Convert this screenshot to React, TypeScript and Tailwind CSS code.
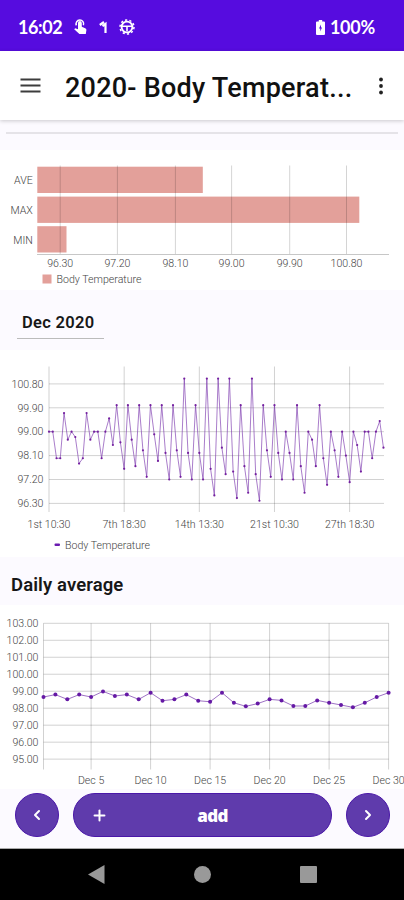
import { ChevronLeft, ChevronRight, Plus } from "lucide-react";

const READINGS = [
  99, 99, 98, 98, 99.7, 98.7, 99, 98.8, 97.8, 98, 99.7, 98.7, 99, 99, 98,
  99, 99.5, 98.5, 100, 98.6, 97.6, 100, 98.7, 97.7, 100, 98.3, 97.3, 100, 98.9, 97.9,
  100, 98.2, 97.2, 100, 98.3, 97.3, 101, 98.2, 97.2, 100, 98.2, 97.2, 101, 97.6, 96.6,
  101, 98.4, 97.4, 101, 97.5, 96.5, 100, 97.7, 96.7, 101, 97.4, 96.4, 100, 98.3, 97.3,
  100, 98.2, 97.2, 99, 98.2, 97.2, 100, 97.7, 96.7, 99, 98.7, 97.7, 100, 98, 97,
  99, 98.3, 97.3, 99, 98.1, 97.1, 99, 98.5, 97.5, 99, 99, 98, 99, 99.4, 98.4,
];

const DAILY = [
  98.66, 98.8, 98.52, 98.8, 98.66, 98.99, 98.72, 98.8, 98.52, 98.91,
  98.44, 98.52, 98.8, 98.44, 98.38, 98.91, 98.32, 98.11, 98.27, 98.52,
  98.46, 98.13, 98.13, 98.46, 98.32, 98.19, 98.05, 98.32, 98.66, 98.91,
];

const summaryBars = [
  { label: "AVE", y: 16.7, width: 165.5 },
  { label: "MAX", y: 46.6, width: 322 },
  { label: "MIN", y: 76.2, width: 29.2 },
];

const summaryTicks = [
  { label: "96.30", x: 60.2 },
  { label: "97.20", x: 117.4 },
  { label: "98.10", x: 175.4 },
  { label: "99.00", x: 231.6 },
  { label: "99.90", x: 289.7 },
  { label: "100.80", x: 346.5 },
];

const readingTicks = ["1st 10:30", "7th 18:30", "14th 13:30", "21st 10:30", "27th 18:30"];

const labelClass = "fill-[#444] font-['Roboto',sans-serif] text-[10.6px] font-light";

function StatusBar() {
  return (
    <div className="flex h-[51px] shrink-0 items-center bg-[#560cdf] pl-[18px] pr-[29px] pt-[3px] font-['Lato',sans-serif] text-[18px] font-bold text-white">
      <span className="w-[55px] tracking-[-0.4px]">16:02</span>
      <svg className="h-4 w-[62px]" viewBox="0 0 62 16" fill="none">
        {/* touch */}
        <path
          d="M5 8V4a1.900 1.900 0 0 1 3.800 0v3.800l3.400 1.400q1.400.6 1.200 1.800l-.6 4H6.400L1.200 10.200l1-1L5 10.200Z"
          fill="white"
        />
        <path d="M3.400 6.400A3.800 3.800 0 1 1 10.400 6.200" stroke="white" strokeWidth="1.500" />
        <path d="M26.800 6 31 3M29.500 7.200l3-2.200V14" stroke="white" strokeWidth="2.200" />
        {/* wheel */}
        <circle cx="54" cy="8" r="5.400" stroke="white" strokeWidth="1.900" />
        <circle cx="54" cy="8" r="7" stroke="white" strokeWidth="1.500" strokeDasharray="2.200 2.200" />
        <path d="M49 7.200h10M54 7.200v5" stroke="white" strokeWidth="1.600" />
      </svg>
      <svg className="ml-auto mr-[5px] h-[15px] w-[9px]" viewBox="0 0 9 15" fill="white">
        <path d="M2.800 0h3.400v1.500H8q1 0 1 1V14q0 1-1 1H1q-1 0-1-1V2.500q0-1 1-1h1.800Z" />
        <path d="M5 4.500 3 8.500h1.300V11.500L6 7.500H5Z" fill="#560cdf" />
      </svg>
      <span className="tracking-[-0.25px]">100%</span>
    </div>
  );
}

function AppBar() {
  return (
    <header className="relative flex h-[69px] shrink-0 items-center bg-white pl-5 shadow-[0_1px_4px_rgba(0,0,0,0.2)]">
      <svg className="h-4 w-[21px]" viewBox="0 0 21 16" stroke="#3c3c3c" strokeWidth="1.9">
        <path d="M.5 1.500h20M.5 7.500h20M.5 13.500h20" />
      </svg>
      <h1 className="ml-6 mt-[5px] w-[290px] whitespace-nowrap text-[27px] font-medium leading-none tracking-[0.24px] text-[#111]">
        2020- Body Temperat...
      </h1>
      <svg className="ml-[22px] h-5 w-2" viewBox="0 0 8 20" fill="#222">
        <circle cx="4" cy="3.500" r="1.900" />
        <circle cx="4" cy="10" r="1.900" />
        <circle cx="4" cy="16.500" r="1.900" />
      </svg>
    </header>
  );
}

function SummaryChart() {
  return (
    <svg className="block h-[140px] w-full shrink-0 bg-white" viewBox="0 0 404 140">
      {summaryBars.map((bar) => (
        <g key={bar.label}>
          <rect x="37.300" y={bar.y} width={bar.width} height="26.300" fill="#e3a09a" />
          <text x="32.800" y={bar.y + 17.5} textAnchor="end" className={labelClass}>
            {bar.label}
          </text>
        </g>
      ))}
      {summaryTicks.map((tick) => (
        <g key={tick.label}>
          <path d={`M${tick.x} 15.500V104`} stroke="#000" strokeOpacity="0.17" />
          <text x={tick.x} y="116.500" textAnchor="middle" className={labelClass}>
            {tick.label}
          </text>
        </g>
      ))}
      <path d="M37 104.500H389" stroke="#000" strokeOpacity="0.22" />
      <rect x="42.500" y="124.500" width="9" height="9" fill="#e3a09a" />
      <text x="56.500" y="133" className={labelClass}>Body Temperature</text>
    </svg>
  );
}

function ReadingsChart() {
  const x = (i: number) => 49 + i * 3.758;
  const y = (v: number) => 81.7 - (v - 99) * 26.55;
  const line = READINGS.map((v, i) => `${x(i)},${y(v)}`).join(" ");

  return (
    <svg className="block h-[207px] w-full shrink-0 bg-white" viewBox="0 0 404 207">
      {[100.8, 99.9, 99, 98.1, 97.2, 96.3].map((v) => (
        <g key={v}>
          <path d={`M49 ${y(v)}H384`} stroke="#000" strokeOpacity="0.18" />
          <text x="43.500" y={y(v) + 3.7} textAnchor="end" className={labelClass}>
            {v.toFixed(2)}
          </text>
        </g>
      ))}
      {readingTicks.map((label, i) => (
        <g key={label}>
          <path d={`M${x(i * 20)} 16.500V162`} stroke="#000" strokeOpacity="0.18" />
          <text x={x(i * 20)} y="177.500" textAnchor="middle" className={labelClass}>
            {label}
          </text>
        </g>
      ))}
      <polyline points={line} fill="none" stroke="#7b38ae" strokeOpacity="0.65" strokeWidth="1" />
      {READINGS.map((v, i) => (
        <circle key={i} cx={x(i)} cy={y(v)} r="1.100" fill="#74209f" />
      ))}
      <rect x="54.500" y="193.500" width="5.500" height="2.500" rx="1" fill="#6a1bb0" />
      <text x="65" y="198.700" className={labelClass}>Body Temperature</text>
    </svg>
  );
}

function DailyChart() {
  const x = (day: number) => 43.5 + (day - 1) * 11.9;
  const y = (v: number) => 18.3 + (103 - v) * 16.98;
  const line = DAILY.map((v, i) => `${x(i + 1)},${y(v)}`).join(" ");

  return (
    <svg className="block h-[184px] w-full shrink-0 bg-white" viewBox="0 0 404 184">
      {[103, 102, 101, 100, 99, 98, 97, 96, 95].map((v) => (
        <g key={v}>
          <path d={`M43.500 ${y(v)}H388.600`} stroke="#000" strokeOpacity="0.18" />
          <text x="38.500" y={y(v) + 3.7} textAnchor="end" className={labelClass}>
            {v.toFixed(2)}
          </text>
        </g>
      ))}
      {[1, 5, 10, 15, 20, 25, 30].map((day) => (
        <g key={day}>
          <path d={`M${x(day)} 18.300V164.500`} stroke="#000" strokeOpacity="0.18" />
          {day > 1 && (
            <text x={x(day)} y="179" textAnchor="middle" className={labelClass}>
              {`Dec ${day}`}
            </text>
          )}
        </g>
      ))}
      <polyline points={line} fill="none" stroke="#6f2da8" strokeOpacity="0.85" strokeWidth="0.8" />
      {DAILY.map((v, i) => (
        <circle key={i} cx={x(i + 1)} cy={y(v)} r="2" fill="#6519a5" />
      ))}
    </svg>
  );
}

function BottomBar() {
  const round =
    "flex size-[44px] items-center justify-center rounded-full border border-[#4a17a8] bg-[#5f3bac] text-white";

  return (
    <div className="flex h-[60px] shrink-0 items-start border-b border-[#aaa] pl-[15px] pr-[14px] pt-[4px]">
      <button className={round} aria-label="Previous month">
        <ChevronLeft size={16} strokeWidth={3} />
      </button>
      <button className="ml-[14px] mr-[14px] flex h-[44px] flex-1 items-center rounded-full border border-[#4a17a8] bg-[#5f3bac] pl-[17px] pr-[14px] text-white">
        <Plus size={17} strokeWidth={2.8} />
        <span className="flex-1 pt-px text-center font-['Open_Sans',sans-serif] text-[17px] font-extrabold tracking-[-0.7px]">
          add
        </span>
      </button>
      <button className={round} aria-label="Next month">
        <ChevronRight size={16} strokeWidth={3} />
      </button>
    </div>
  );
}

function SystemNav() {
  return (
    <nav className="flex h-[51px] shrink-0 items-center justify-between bg-black pl-[88px] pr-[87px]">
      <svg className="h-[19px] w-[17px]" viewBox="0 0 17 19" fill="#999">
        <path d="M0 9.500 16.500 0v19Z" />
      </svg>
      <div className="mr-[1px] size-[17px] rounded-full bg-[#999]" />
      <div className="size-[17px] rounded-[1px] bg-[#999]" />
    </nav>
  );
}

export default function App() {
  return (
    <div className="flex h-[900px] w-[404px] flex-col overflow-hidden bg-[#fcfaff] font-['Roboto',sans-serif]">
      <StatusBar />
      <AppBar />
      <div className="mx-[6px] mt-[12px] h-[1.5px] shrink-0 bg-[#e5e3e8]" />
      <div className="mt-[16.5px] shrink-0">
        <SummaryChart />
      </div>
      <div className="h-[60px] shrink-0 pl-[17px] pt-[19px]">
        <div className="h-[30px] w-[87px] border-b border-[#bbb] pl-[5px] pt-[4px] text-[16.5px] font-semibold leading-[20px] tracking-[0.3px] text-[#171717]">
          Dec 2020
        </div>
      </div>
      <ReadingsChart />
      <h2 className="h-[48px] shrink-0 pl-[11px] pt-[17px] text-[18.5px] font-semibold leading-[22px] tracking-[0.1px] text-[#171717]">
        Daily average
      </h2>
      <DailyChart />
      <BottomBar />
      <SystemNav />
    </div>
  );
}
